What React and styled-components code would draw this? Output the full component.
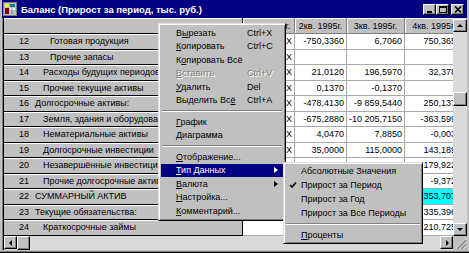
import React from "react";
import styled, { createGlobalStyle, css } from "styled-components";

const GlobalStyle = createGlobalStyle`
  html, body {
    margin: 0;
    padding: 0;
    background: #c0c0c0;
  }
  body {
    font-family: "Liberation Sans", Arial, sans-serif;
    font-size: 9px;
    color: #000;
  }
  * {
    box-sizing: border-box;
  }
`;

const COLS = "239px 52px 52px 58px 59px";

const raised = css`
  background: #c0c0c0;
  border: 1px solid;
  border-color: #fff #000 #000 #fff;
  box-shadow: inset -1px -1px 0 #808080;
`;

const Window = styled.div`
  position: relative;
  width: 469px;
  height: 253px;
  overflow: hidden;
  background: #c0c0c0;
  padding: 0 2px 3px 2px;
  display: flex;
  flex-direction: column;
  box-shadow: inset 0 -1px 0 #000, inset 0 -2px 0 #808080;
`;

const TitleBar = styled.div`
  flex: none;
  height: 18px;
  background: #000080;
  display: flex;
  align-items: center;
  gap: 4px;
  padding: 0 3px 0 1px;
  color: #fff;
  font-weight: bold;
  font-size: 9.5px;
  white-space: nowrap;
`;

const TitleButtons = styled.div`
  margin-left: auto;
  display: flex;
  align-items: center;
`;

const TitleButton = styled.div`
  ${raised};
  width: 13px;
  height: 11px;
  margin-left: ${(p) => (p.$gap ? "2px" : "0")};
  display: flex;
  align-items: center;
  justify-content: center;
`;

const Client = styled.div`
  flex: 1;
  min-height: 0;
  display: grid;
  grid-template-columns: 1fr 14px;
  grid-template-rows: 1fr 14px;
  padding-left: 2px;
  box-shadow: inset 1px 0 0 #808080, inset 2px 0 0 #000;
`;

const Sheet = styled.div`
  overflow: hidden;
  background: #fff;
  display: flex;
  flex-direction: column;
`;

const Row = styled.div`
  flex: none;
  display: grid;
  grid-template-columns: ${COLS};
  height: ${(p) => (p.$header ? "16px" : "15.5px")};
`;

const LabelCell = styled.div`
  background: #c0c0c0;
  border-bottom: 1px solid #000;
  border-right: 1px solid #000;
  box-shadow: inset 0 1px 0 #fff;
  display: flex;
  align-items: center;
  white-space: nowrap;
  overflow: hidden;
`;

const Num = styled.span`
  flex: none;
  width: 25px;
  text-align: right;
`;

const Label = styled.span`
  padding-left: ${(p) => [6, 14, 21][p.$level]}px;
`;

const HeadCell = styled.div`
  background: #c0c0c0;
  border-right: 1px solid #808080;
  border-bottom: 1px solid #808080;
  box-shadow: inset 1px 1px 0 #fff;
  display: flex;
  align-items: center;
  justify-content: center;
  white-space: nowrap;
  overflow: hidden;
`;

const ValueCell = styled.div`
  background: ${(p) => (p.$hl ? "#00ffff" : "#fff")};
  border-right: 1px solid #a8a8a8;
  border-bottom: 1px solid #a8a8a8;
  display: flex;
  align-items: center;
  justify-content: flex-end;
  padding-right: 2px;
  white-space: nowrap;
  overflow: hidden;
`;

const VScroll = styled.div`
  display: flex;
  flex-direction: column;
  background: #dadada;
  padding-top: 1px;
`;

const HScroll = styled.div`
  display: flex;
  background: #dadada;
`;

const ScrollButton = styled.div`
  ${raised};
  flex: none;
  width: ${(p) => (p.$wide ? "13px" : "14px")};
  height: 13px;
  display: flex;
  align-items: center;
  justify-content: center;
  margin-top: ${(p) => (p.$end ? "auto" : "0")};
  margin-left: ${(p) => (p.$push ? "auto" : "0")};
`;

const Thumb = styled.div`
  ${raised};
  flex: none;
  width: ${(p) => p.$w}px;
  height: ${(p) => p.$h}px;
`;

const Corner = styled.div`
  background: #c0c0c0;
  display: flex;
  align-items: flex-end;
  justify-content: flex-end;
`;

const Menu = styled.div`
  position: absolute;
  left: ${(p) => p.$x}px;
  top: ${(p) => p.$y}px;
  width: ${(p) => p.$w}px;
  background: #c0c0c0;
  border: 1px solid;
  border-color: #dfdfdf #000 #000 #dfdfdf;
  box-shadow: inset 1px 1px 0 #fff, inset -1px -1px 0 #808080;
  padding: ${(p) => p.$pad}px;
  z-index: ${(p) => p.$z};
`;

const Item = styled.div`
  height: ${(p) => p.$h}px;
  display: flex;
  align-items: center;
  padding: 0 4px 0 ${(p) => p.$indent}px;
  white-space: nowrap;
  background: ${(p) => (p.$active ? "#000080" : "transparent")};
  color: ${(p) => (p.$active ? "#fff" : p.$disabled ? "#808080" : "#000")};
  text-shadow: ${(p) => (p.$disabled ? "1px 1px 0 #fff" : "none")};
`;

const ItemText = styled.span`
  flex: 1;
`;

const Shortcut = styled.span`
  flex: none;
  width: 32px;
`;

const CheckSlot = styled.span`
  flex: none;
  width: 16px;
  display: flex;
  align-items: center;
  justify-content: center;
`;

const Arrow = styled.span`
  flex: none;
  width: 0;
  height: 0;
  border-top: 3.5px solid transparent;
  border-bottom: 3.5px solid transparent;
  border-left: 4px solid ${(p) => (p.$active ? "#fff" : "#000")};
  margin-right: 1px;
`;

const Separator = styled.div`
  height: 2px;
  margin: 3px 1px;
  border-top: 1px solid #808080;
  border-bottom: 1px solid #fff;
`;

const headers = ["1кв. 1995г.", "2кв. 1995г.", "3кв. 1995г.", "4кв. 1995г."];

const rows = [
  { n: 12, label: "Готовая продукция", level: 2, vals: ["X", "-750,3360", "6,7060", "750,3650"] },
  { n: 13, label: "Прочие запасы", level: 2, vals: ["X", "", "", ""] },
  { n: 14, label: "Расходы будущих периодов", level: 1, vals: ["X", "21,0120", "196,5970", "32,3780"] },
  { n: 15, label: "Прочие текущие активы", level: 1, vals: ["X", "0,1370", "-0,1370", ""] },
  { n: 16, label: "Долгосрочные активы:", level: 0, vals: ["X", "-478,4130", "-9 859,5440", "250,1370"] },
  { n: 17, label: "Земля, здания и оборудование", level: 1, vals: ["X", "-675,2880", "-10 205,7150", "-363,5990"] },
  { n: 18, label: "Нематериальные активы", level: 1, vals: ["X", "4,0470", "7,8850", "-0,0030"] },
  { n: 19, label: "Долгосрочные инвестиции", level: 1, vals: ["X", "35,0000", "115,0000", "143,1890"] },
  { n: 20, label: "Незавершённые инвестиции", level: 1, vals: ["X", "12,5140", "20,8910", "179,9220"] },
  { n: 21, label: "Прочие долгосрочные активы", level: 1, vals: ["X", "-0,2700", "-4,5300", "-9,3720"] },
  { n: 22, label: "СУММАРНЫЙ АКТИВ", level: 0, vals: ["X", "-128,9990", "-96,7680", "353,7070"], hl: 3 },
  { n: 23, label: "Текущие обязательства:", level: 0, vals: ["X", "-60,1160", "-100,3400", "335,3960"] },
  { n: 24, label: "Краткосрочные займы", level: 1, vals: ["X", "-31,0000", "-21,0000", "210,7250"] },
];

const mainMenu = [
  { t: "Вырезать", u: 1, sc: "Ctrl+X" },
  { t: "Копировать", u: 0, sc: "Ctrl+C" },
  { t: "Копировать Всё", u: 1 },
  { t: "Вставить", u: 0, sc: "Ctrl+V", disabled: true },
  { t: "Удалить", u: 0, sc: "Del" },
  { t: "Выделить Всё", u: 11, sc: "Ctrl+A" },
  { sep: true },
  { t: "График", u: 0 },
  { t: "Диаграмма", u: 0 },
  { sep: true },
  { t: "Отображение...", u: 0 },
  { t: "Тип Данных", u: 0, sub: true, active: true },
  { t: "Валюта", u: 0, sub: true },
  { t: "Настройка...", u: 0 },
  { t: "Комментарий...", u: 0 },
];

const subMenu = [
  { t: "Абсолютные Значения" },
  { t: "Прирост за Период", checked: true },
  { t: "Прирост за Год" },
  { t: "Прирост за Все Периоды" },
  { sep: true },
  { t: "Проценты", u: 0 },
];

function Mnemonic({ text, at }) {
  if (at === undefined) return text;
  return (
    <>
      {text.slice(0, at)}
      <u>{text[at]}</u>
      {text.slice(at + 1)}
    </>
  );
}

function AppIcon() {
  return (
    <svg width="14" height="14" viewBox="0 0 14 14">
      <rect x="0.5" y="0.5" width="13" height="13" fill="#c0c0c0" stroke="#808080" />
      <rect x="2" y="2" width="4" height="3" fill="#ffff00" />
      <rect x="7" y="2" width="5" height="3" fill="#008080" />
      <rect x="2" y="6" width="4" height="6" fill="#800000" />
      <rect x="7" y="6" width="5" height="6" fill="#fff" />
      <path d="M7 9h5M7 11h5M9 6v6" stroke="#808080" strokeWidth="1" />
    </svg>
  );
}

function Tri({ dir }) {
  const d = {
    up: "M1 5 L4 2 L7 5 Z",
    down: "M1 2 L4 5 L7 2 Z",
    left: "M5 1 L2 4 L5 7 Z",
    right: "M3 1 L6 4 L3 7 Z",
  }[dir];
  return (
    <svg width="8" height="8" viewBox="0 0 8 8">
      <path d={d} fill="#000" />
    </svg>
  );
}

function Grip() {
  return (
    <svg width="13" height="13" viewBox="0 0 13 13">
      <path d="M12 2 L2 12 M12 6 L6 12 M12 10 L10 12" stroke="#fff" strokeWidth="1" />
      <path d="M12 3 L3 12 M12 7 L7 12 M12 11 L11 12" stroke="#808080" strokeWidth="1.4" />
    </svg>
  );
}

function Check() {
  return (
    <svg width="8" height="8" viewBox="0 0 8 8">
      <path d="M1 4 L3 6 L7 1.5" stroke="#000" strokeWidth="1.6" fill="none" />
    </svg>
  );
}

function App() {
  return (
    <>
      <GlobalStyle />
      <Window>
        <TitleBar>
          <AppIcon />
          <span>Баланс (Прирост за период, тыс. руб.)</span>
          <TitleButtons>
            <TitleButton>
              <svg width="7" height="7" viewBox="0 0 7 7">
                <rect x="1" y="5" width="5" height="2" fill="#000" />
              </svg>
            </TitleButton>
            <TitleButton>
              <svg width="8" height="7" viewBox="0 0 8 7">
                <rect x="0.5" y="0.5" width="7" height="6" fill="none" stroke="#000" />
                <rect x="0" y="0" width="8" height="2" fill="#000" />
              </svg>
            </TitleButton>
            <TitleButton $gap>
              <svg width="8" height="7" viewBox="0 0 8 7">
                <path d="M1 0.5 L7 6.5 M7 0.5 L1 6.5" stroke="#000" strokeWidth="1.6" />
              </svg>
            </TitleButton>
          </TitleButtons>
        </TitleBar>

        <Client>
          <Sheet>
            <Row $header>
              <LabelCell />
              {headers.map((h) => (
                <HeadCell key={h}>{h}</HeadCell>
              ))}
            </Row>
            {rows.map((r) => (
              <Row key={r.n}>
                <LabelCell>
                  <Num>{r.n}</Num>
                  <Label $level={r.level}>{r.label}</Label>
                </LabelCell>
                {r.vals.map((v, i) => (
                  <ValueCell key={i} $hl={r.hl === i}>
                    {v}
                  </ValueCell>
                ))}
              </Row>
            ))}
          </Sheet>

          <VScroll>
            <ScrollButton>
              <Tri dir="up" />
            </ScrollButton>
            <Thumb $w={14} $h={14} style={{ marginTop: 60 }} />
            <ScrollButton $end>
              <Tri dir="down" />
            </ScrollButton>
          </VScroll>

          <HScroll>
            <ScrollButton $wide>
              <Tri dir="left" />
            </ScrollButton>
            <Thumb $w={13} $h={14} />
            <ScrollButton $wide $push>
              <Tri dir="right" />
            </ScrollButton>
          </HScroll>

          <Corner>
            <Grip />
          </Corner>
        </Client>

        <Menu $x={158} $y={23} $w={128} $pad={2} $z={2}>
          {mainMenu.map((m, i) =>
            m.sep ? (
              <Separator key={i} />
            ) : (
              <Item key={i} $h={13.5} $indent={15} $active={m.active} $disabled={m.disabled}>
                <ItemText>
                  <Mnemonic text={m.t} at={m.u} />
                </ItemText>
                {m.sc && <Shortcut>{m.sc}</Shortcut>}
                {m.sub && <Arrow $active={m.active} />}
              </Item>
            )
          )}
        </Menu>

        <Menu $x={283} $y={162} $w={140} $pad={1} $z={3}>
          {subMenu.map((m, i) =>
            m.sep ? (
              <Separator key={i} />
            ) : (
              <Item key={i} $h={14} $indent={0}>
                <CheckSlot>{m.checked && <Check />}</CheckSlot>
                <ItemText>
                  <Mnemonic text={m.t} at={m.u} />
                </ItemText>
              </Item>
            )
          )}
        </Menu>
      </Window>
    </>
  );
}

export default App;
